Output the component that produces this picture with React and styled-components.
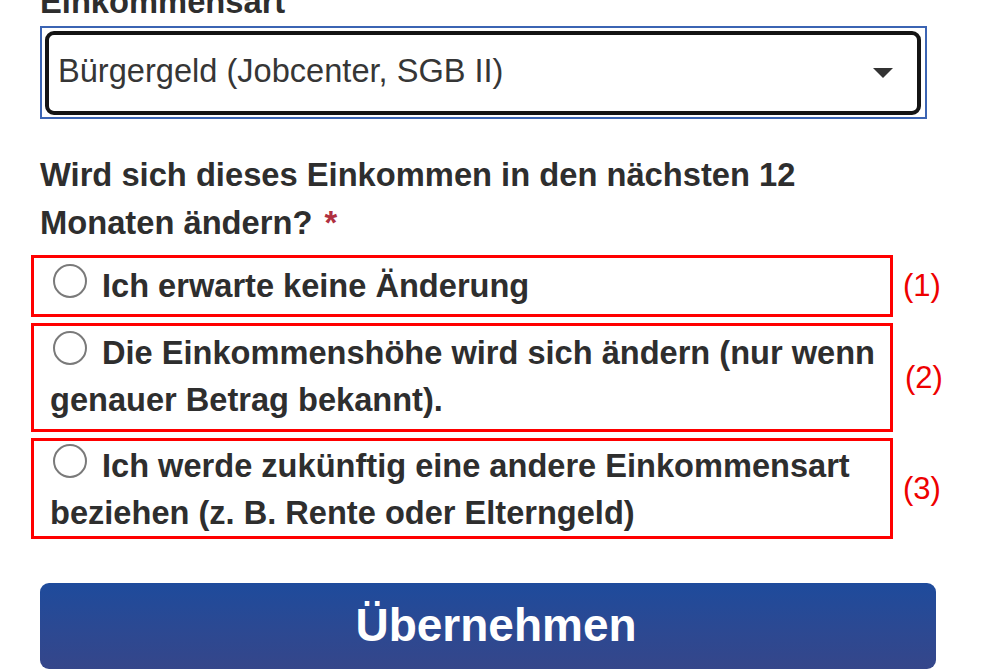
import React from "react";
import styled, { createGlobalStyle } from "styled-components";

const GlobalStyle = createGlobalStyle`
  html, body {
    margin: 0;
    padding: 0;
    background: #ffffff;
    overflow: hidden;
  }
  body {
    font-family: "Liberation Sans", Arial, sans-serif;
    color: #2e2e2e;
  }
`;

const Page = styled.div`
  margin-top: -22px;
  padding-left: 40px;
  width: 968px;
  box-sizing: border-box;
`;

const FieldLabel = styled.div`
  font-size: 32.7px;
  line-height: 48px;
  font-weight: 700;
  color: #2e2e2e;
`;

const SelectFrame = styled.div`
  width: 887px;
  box-sizing: border-box;
  border: 2px solid #3b64b3;
  padding: 3px 4px 2px 3px;
`;

const SelectBox = styled.div`
  height: 84px;
  box-sizing: border-box;
  border: 4px solid #141414;
  border-radius: 9px;
  display: flex;
  align-items: center;
  justify-content: space-between;
  padding: 0 24px 4px 9px;
  font-size: 32.6px;
  line-height: 48px;
  color: #363636;
`;

const Caret = styled.span`
  width: 0;
  height: 0;
  border-left: 10px solid transparent;
  border-right: 10px solid transparent;
  border-top: 10px solid #333333;
  margin-top: 4px;
`;

const Question = styled.div`
  margin-top: 32px;
  font-size: 32.7px;
  line-height: 48px;
  font-weight: 700;
  color: #2e2e2e;
  width: 870px;
`;

const Required = styled.span`
  color: #b03040;
  margin-left: 12px;
`;

const OptionList = styled.div`
  margin-top: 8px;
  display: flex;
  flex-direction: column;
  gap: 6px;
  margin-left: -9px;
`;

const OptionRow = styled.div`
  display: flex;
  align-items: center;
  gap: ${(p) => p.$gap}px;
`;

const OptionBox = styled.label`
  width: 862px;
  box-sizing: border-box;
  border: 3px solid #ff0000;
  padding: ${(p) => p.$pt}px 4px ${(p) => p.$pb}px 16px;
  font-size: 32.6px;
  line-height: 47px;
  font-weight: 700;
  color: #2e2e2e;
`;

const Radio = styled.span`
  display: inline-block;
  width: 34px;
  height: 34px;
  box-sizing: border-box;
  border: 2px solid #7a7a7a;
  border-radius: 50%;
  background: #ffffff;
  margin: 0 15px -1px 3px;
`;

const Marker = styled.span`
  font-size: 31px;
  line-height: 36px;
  color: #ee0000;
  font-weight: 400;
`;

const SubmitButton = styled.button`
  margin-top: 44px;
  width: 896px;
  height: 86px;
  border: none;
  border-radius: 9px;
  background: linear-gradient(to bottom, #1e4b9c 0%, #2b4993 50%, #35468a 100%);
  color: #ffffff;
  font-family: "Liberation Sans", Arial, sans-serif;
  font-size: 46px;
  font-weight: 700;
  display: flex;
  align-items: center;
  justify-content: center;
  padding: 0 0 2px 16px;
  cursor: pointer;
`;

const options = [
  { id: 1, text: "Ich erwarte keine Änderung", pt: 4, pb: 5, gap: 10 },
  {
    id: 2,
    text: "Die Einkommenshöhe wird sich ändern (nur wenn genauer Betrag bekannt).",
    pt: 3,
    pb: 6,
    gap: 12,
  },
  {
    id: 3,
    text: "Ich werde zukünftig eine andere Einkommensart beziehen (z. B. Rente oder Elterngeld)",
    pt: 1,
    pb: 0,
    gap: 10,
  },
];

export default function App() {
  return (
    <>
      <GlobalStyle />
      <Page>
        <FieldLabel>Einkommensart</FieldLabel>
        <SelectFrame>
          <SelectBox>
            <span>Bürgergeld (Jobcenter, SGB II)</span>
            <Caret />
          </SelectBox>
        </SelectFrame>
        <Question>
          Wird sich dieses Einkommen in den nächsten 12 Monaten ändern?<Required>*</Required>
        </Question>
        <OptionList>
          {options.map((o) => (
            <OptionRow key={o.id} $gap={o.gap}>
              <OptionBox $pt={o.pt} $pb={o.pb}>
                <Radio />
                {o.text}
              </OptionBox>
              <Marker>({o.id})</Marker>
            </OptionRow>
          ))}
        </OptionList>
        <SubmitButton>Übernehmen</SubmitButton>
      </Page>
    </>
  );
}
